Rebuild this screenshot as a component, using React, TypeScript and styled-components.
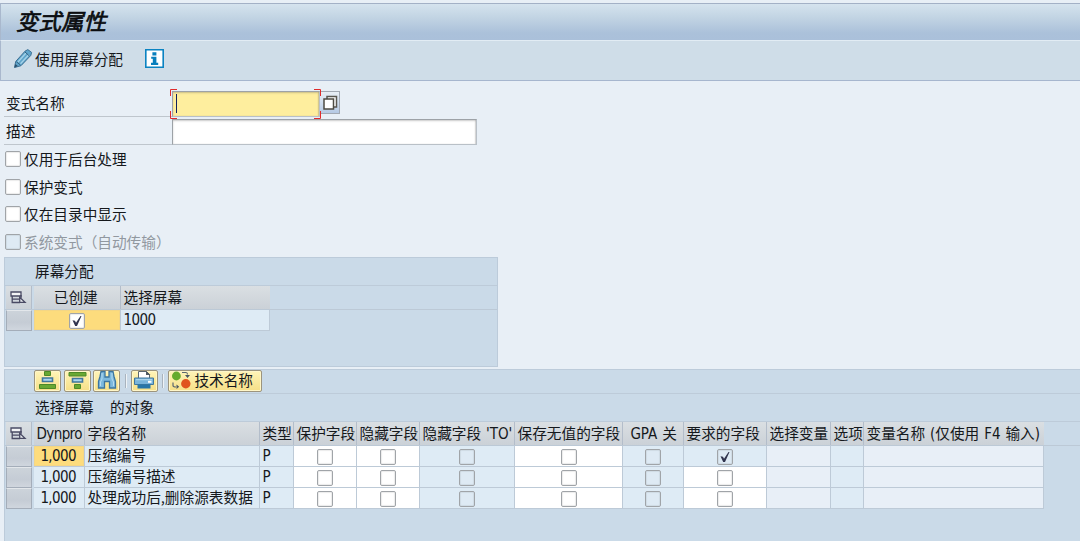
import React from 'react';
import styled, { createGlobalStyle, css } from 'styled-components';

const GlobalStyle = createGlobalStyle`
  * {
    box-sizing: border-box;
  }

  body {
    margin: 0;
    overflow: hidden;
    background: #e8eff6;
    color: #15181c;
    font-family: 'Noto Sans CJK SC', sans-serif;
    font-size: 14.67px;
    line-height: 20px;
    white-space: pre;
  }
`;

const Page = styled.div`
  display: flex;
  flex-direction: column;
  height: 541px;
  padding-top: 3px;
`;

const TitleBar = styled.header`
  flex: none;
  height: 37px;
  padding: 1px 0 0 15px;
  border-top: 1px solid #a3b1c6;
  border-left: 1px solid #a9b8cd;
  background: linear-gradient(#d5e3ee, #c3d5e4 35%, #abc1da 80%, #aac0da);
`;

const Title = styled.h1`
  margin: 0;
  font-size: 22.5px;
  font-weight: 400;
  font-style: italic;
  line-height: 30px;
  color: #0b0d10;
  -webkit-text-stroke: 0.7px #0b0d10;
`;

const AppToolbar = styled.div`
  flex: none;
  display: flex;
  align-items: center;
  height: 41px;
  padding: 0 0 4px 12px;
  border-top: 1px solid #e2ecf4;
  border-left: 1px solid #a9b8cd;
  border-bottom: 1px solid #a6b6ce;
  background: #cfdde8;
`;

const ToolbarAction = styled.button`
  display: flex;
  align-items: center;
  gap: 2px;
  margin: 0 22px 0 0;
  padding: 0;
  border: 0;
  background: none;
  color: inherit;
  font: inherit;
`;

const Form = styled.div`
  flex: none;
  padding: 10px 0 0 4px;
`;

const FieldRow = styled.div`
  display: flex;
  height: 28px;
`;

const FieldLabel = styled.label`
  width: 168px;
  height: 26px;
  padding: 2px 2px 0;
  border-bottom: 1px solid #bfc6cd;
`;

const TextField = styled.div<{ $width: number; $active?: boolean }>`
  position: relative;
  width: ${({ $width }) => $width}px;
  height: 26px;
  border: 1px solid #b9c0c7;
  border-top-color: #9da2a7;
  border-left-color: #9da2a7;
  box-shadow: inset 0 1px 2px rgba(90, 90, 90, 0.3), inset -1px 0 1px rgba(90, 90, 90, 0.2);
  background: ${({ $active }) => ($active ? '#feee9e' : '#fff')};
`;

const Caret = styled.span`
  display: block;
  width: 1px;
  height: 19px;
  margin: 2px 0 0 3px;
  background: #10205e;
`;

const FocusFrame = styled.svg`
  position: absolute;
  z-index: 1;
  left: -3px;
  top: -3px;
`;

const ValueHelp = styled.button`
  width: 20px;
  height: 23px;
  padding: 0;
  border: 1px solid #a2a9b3;
  border-left: 0;
  background: linear-gradient(#e9eff5, #b5c9e4);
  line-height: 0;
`;

const Options = styled.div`
  flex: none;
  height: 110px;
  padding-left: 5px;
`;

const Option = styled.label<{ $disabled?: boolean }>`
  display: flex;
  align-items: center;
  gap: 3px;
  height: 27.7px;
  padding-bottom: 4px;
  color: ${({ $disabled }) => ($disabled ? '#9198a0' : 'inherit')};
`;

const Box = styled.span<{ $disabled?: boolean }>`
  flex: none;
  width: 16px;
  height: 16px;
  border: 1px solid #a0a4a8;
  border-radius: 2px;
  box-shadow: inset 0 0 1px 1px ${({ $disabled }) => ($disabled ? '#cfdbe4' : '#ececec')};
  background: ${({ $disabled }) => ($disabled ? '#deeaf4' : '#fff')};
  line-height: 0;
`;

const Panel = styled.section<{ $compact?: boolean }>`
  margin-left: 4px;
  border: 1px solid #bccbda;
  background: #cadae8;
  ${({ $compact }) =>
    $compact
      ? css`
          flex: none;
          width: 494px;
          height: 110px;
        `
      : css`
          flex: 1;
          margin-top: 2px;
          border-right: 0;
          border-bottom: 0;
        `}
`;

const PanelTitle = styled.div`
  height: 28px;
  padding: 3px 0 0 30px;
  border-bottom: 1px solid #bdcbd9;
`;

const PanelToolbar = styled.div`
  display: flex;
  height: 24px;
  padding-left: 29px;
  border-bottom: 1px solid #bdcbd9;
`;

const ToolButton = styled.button<{ $wide?: boolean }>`
  display: flex;
  align-items: center;
  justify-content: ${({ $wide }) => ($wide ? 'flex-start' : 'center')};
  gap: 3px;
  width: ${({ $wide }) => ($wide ? 94 : 27)}px;
  height: 22px;
  margin-right: 2.6px;
  padding: 0 0 2px ${({ $wide }) => ($wide ? 2 : 0)}px;
  border: 1px solid #9c947d;
  border-radius: 2px;
  box-shadow: inset 0 0 0 1px #fff6c8;
  background: linear-gradient(#fff4b8, #f6df87);
  color: inherit;
  font: inherit;
  line-height: 18px;
`;

const ToolDivider = styled.span`
  width: 2px;
  height: 14px;
  margin: 4px 4px 0 2px;
  border-left: 1px solid #a9b3bd;
  background: #eef3f7;
`;

const Table = styled.div<{ $columns: string }>`
  [role='row'] {
    display: grid;
    grid-template-columns: 26px 2px ${({ $columns }) => $columns};
    padding-left: 1px;
    height: 21px;
  }
`;

const HeadRow = styled.div`
  &[role='row'] {
    height: 24px;
    border-bottom: 1px solid #bcc9d6;
  }
`;

const HeadCell = styled.div<{ $center?: boolean }>`
  padding: 1px ${({ $center }) => ($center ? 5 : 0)}px 0 2.5px;
  border-right: 1px solid #b3bdca;
  background: linear-gradient(#dadfe3, #cbd1d7);
  line-height: 19px;
  text-align: ${({ $center }) => ($center ? 'center' : 'left')};

  &:last-child {
    border-right: 0;
  }
`;

const Config = styled(HeadCell)`
  padding: 4px 0 0 4px;
  line-height: 0;
`;

const RowSelector = styled.div`
  border: 1px solid #a4adb9;
  border-top-color: #e3e7eb;
  background: linear-gradient(#ccd3da, #c5ccd5 60%, #d0d6de);
`;

type CellTone = 'read' | 'edit' | 'blank' | 'focus';

const tones: Record<CellTone, string> = {
  read: '#deebf5',
  edit: '#fff',
  blank: '#e8eff7',
  focus: '#fddc7d',
};

const Cell = styled.div<{ $tone?: CellTone; $right?: boolean }>`
  padding: 0 ${({ $right }) => ($right ? 8 : 0)}px 0 2.5px;
  border-right: 1px solid #bdcad7;
  border-bottom: 1px solid #bdcad7;
  background: ${({ $tone = 'read' }) => tones[$tone]};
  box-shadow: ${({ $tone }) => ($tone === 'focus' ? 'inset 0 0 0 1px #f4d685' : 'none')};
  line-height: 17px;
  text-align: ${({ $right }) => ($right ? 'right' : 'left')};
`;

const CheckCell = styled(Cell)`
  display: flex;
  justify-content: center;
  align-items: flex-start;
  padding: 3px 0 0;
`;

const Latin = styled.span<{ $tight?: boolean }>`
  font-family: 'DejaVu Sans Condensed', 'DejaVu Sans', sans-serif;
  font-stretch: condensed;
  font-size: 15px;
  letter-spacing: ${({ $tight }) => ($tight ? '-0.6px' : '0')};
  word-spacing: 0.6px;
`;

const CheckMark = () => (
  <svg width="14" height="14" viewBox="0 0 14 14">
    <path d="M2.5 6.2 5 6.8l1 2L10.5 2h1L7 12H5.2z" fill="#30344e" />
  </svg>
);

const Check: React.FC<{ checked?: boolean; disabled?: boolean }> = ({ checked, disabled }) => (
  <Box $disabled={disabled}>{checked && <CheckMark />}</Box>
);

const PencilIcon = () => (
  <svg width="20" height="20" viewBox="0 0 20 20">
    <path d="M1.5 18.5 2.7 12.5 12 2.2 14.8.6l3.8 2.8-.8 3L8 16.7z" fill="#5fa5cb" stroke="#3d7093" />
    <path d="M5 13 13 4M7.5 14.8 15.8 5.8" stroke="#a5d2e8" strokeWidth="1.3" />
    <path d="m12 3 4.2 3.8M3.3 12.7l4 3.2" stroke="#315f80" />
    <path d="m1.5 18.5.8-3.5 2.6 2z" fill="#2c516d" />
  </svg>
);

const InfoIcon = () => (
  <svg width="19" height="19" viewBox="0 0 19 19">
    <path fill="#fff" stroke="#0b83c2" strokeWidth="1.6" d="M.8.8h17.4v17.4H.8z" />
    <path fill="#087fbd" d="M7.4 3.2h4v3.2h-4zM6.2 7.7h5.2v6h1.8V16H6v-2.3h1.8V9.8H6.2z" />
  </svg>
);

const HelpIcon = () => (
  <svg width="16" height="20" viewBox="0 0 16 20">
    <path d="M5 3.5h9.5V14H5z" fill="#fff" stroke="#5a5750" strokeWidth="1.5" />
    <path d="M2 6h9.5v10H2z" fill="#fff" stroke="#4e4b43" strokeWidth="1.5" />
  </svg>
);

const ConfigIcon = () => (
  <svg width="17" height="16" viewBox="0 0 17 16" fill="none" stroke="#4a4b64" strokeWidth="1.3">
    <path d="M1 2h10v4H1z" fill="#f3f4f6" />
    <path d="M2.2 6v6.500H10M2.200 9.200H9M11 5v3" />
    <path d="M9.700 7.300 15 12.300H9.700z" fill="#e9ebef" />
  </svg>
);

const SortUpIcon = () => (
  <svg width="19" height="19" viewBox="0 0 19 19">
    <path d="M6.500 0.500h6V4.500h-6zM1.500 13.500h16v4h-16z" fill="#69a832" stroke="#4c8928" />
    <path d="M4.500 7h10v3.500h-10z" fill="#a9d5ef" stroke="#41779e" strokeWidth="1.6" />
  </svg>
);

const SortDownIcon = () => (
  <svg width="19" height="19" viewBox="0 0 19 19">
    <path d="M1 1.500h17v3.500H1zM6.500 13.500h6v4h-6z" fill="#69a832" stroke="#4c8928" />
    <path d="M4.500 7.500h10V11h-10z" fill="#a9d5ef" stroke="#41779e" strokeWidth="1.6" />
  </svg>
);

const FindIcon = () => (
  <svg width="20" height="20" viewBox="0 0 20 20">
    <path
      d="M4 1.5h4V7h4V1.5h4l1 5 1.5 5V18h-6v-6.5h-5V18h-6v-6.5L3 6.5z"
      fill="#7db9de"
      stroke="#3c759f"
      strokeWidth="1.3"
    />
    <path d="M5 3v6l-1.5 3v4M15 3v6l1.5 3v4" fill="none" stroke="#b6dbf0" />
  </svg>
);

const PrintIcon = () => (
  <svg width="22" height="20" viewBox="0 0 22 20">
    <path d="M5.5 9V1.5h8l3 3V9" fill="#fff" stroke="#5e6870" />
    <path d="M13 1v4h4.5z" fill="#4f5961" />
    <path d="M1.5 8h19v6.5h-19z" fill="#79b4db" stroke="#41779e" />
    <path d="M4.5 14.5h13v4h-13z" fill="#2876a8" />
    <path d="M3 9.7h16" stroke="#b6dcf1" />
    <path d="M15 10.8h3.5v2H15z" fill="#fff" />
  </svg>
);

const SwapIcon = () => (
  <svg width="20" height="18" viewBox="0 0 20 18">
    <circle cx="5.4" cy="5" r="4.4" fill="#66ab2d" />
    <circle cx="14.8" cy="12.8" r="4.7" fill="#e0531e" />
    <path d="M11 1.5h4q1.500 0 1.500 2M2 11.500v3q0 1.500 3 1.500" fill="none" stroke="#5b6770" strokeWidth="1.2" />
    <path d="M14 4h5l-2.500 3zM5.500 13.500V18L8.200 15.800z" fill="#4b5761" />
  </svg>
);

const options = ['仅用于后台处理', '保护变式', '仅在目录中显示'];

const fieldNames = ['压缩编号', '压缩编号描述', '处理成功后,删除源表数据'];

const ScreenAssignment = () => (
  <Panel $compact>
    <PanelTitle>屏幕分配</PanelTitle>
    <Table $columns="87px 149px">
      <HeadRow role="row">
        <Config><ConfigIcon /></Config>
        <span />
        <HeadCell $center>已创建</HeadCell>
        <HeadCell>选择屏幕</HeadCell>
      </HeadRow>
      <div role="row">
        <RowSelector />
        <span />
        <CheckCell $tone="focus"><Check checked /></CheckCell>
        <Cell><Latin $tight>1000</Latin></Cell>
      </div>
    </Table>
  </Panel>
);

const objectColumns = '51px 175px 34px 63px 63px 95px 108px 61px 83px 64px 33px 180px';

const ScreenObjects = () => (
  <Panel>
    <PanelToolbar>
      <ToolButton><SortUpIcon /></ToolButton>
      <ToolButton><SortDownIcon /></ToolButton>
      <ToolButton><FindIcon /></ToolButton>
      <ToolDivider />
      <ToolButton><PrintIcon /></ToolButton>
      <ToolDivider />
      <ToolButton $wide><SwapIcon />技术名称</ToolButton>
    </PanelToolbar>
    <PanelTitle>选择屏幕{'     '}的对象</PanelTitle>
    <Table $columns={objectColumns}>
      <HeadRow role="row">
        <Config><ConfigIcon /></Config>
        <span />
        <HeadCell><Latin $tight>Dynpro</Latin></HeadCell>
        <HeadCell>字段名称</HeadCell>
        <HeadCell>类型</HeadCell>
        <HeadCell>保护字段</HeadCell>
        <HeadCell>隐藏字段</HeadCell>
        <HeadCell>隐藏字段<Latin> 'TO'</Latin></HeadCell>
        <HeadCell>保存无值的字段</HeadCell>
        <HeadCell><Latin>{' GPA '}</Latin>关</HeadCell>
        <HeadCell>要求的字段</HeadCell>
        <HeadCell>选择变量</HeadCell>
        <HeadCell>选项</HeadCell>
        <HeadCell>变量名称<Latin> (</Latin>仅使用<Latin> F4 </Latin>输入<Latin>)</Latin></HeadCell>
      </HeadRow>
      {fieldNames.map((name, i) => (
        <div role="row" key={name}>
          <RowSelector />
          <span />
          <Cell $right $tone={i === 0 ? 'focus' : 'read'}><Latin $tight>1,000</Latin></Cell>
          <Cell>{name}</Cell>
          <Cell><Latin>P</Latin></Cell>
          <CheckCell $tone="edit"><Check /></CheckCell>
          <CheckCell $tone="edit"><Check /></CheckCell>
          <CheckCell><Check disabled /></CheckCell>
          <CheckCell $tone="edit"><Check /></CheckCell>
          <CheckCell><Check disabled /></CheckCell>
          <CheckCell $tone={i === 0 ? 'read' : 'edit'}>
            <Check checked={i === 0} disabled={i === 0} />
          </CheckCell>
          <Cell $tone="blank" />
          <Cell />
          <Cell $tone="blank" />
        </div>
      ))}
    </Table>
  </Panel>
);

const App: React.FC = () => (
  <>
    <GlobalStyle />
    <Page>
      <TitleBar>
        <Title>变式属性</Title>
      </TitleBar>
      <AppToolbar>
        <ToolbarAction><PencilIcon />使用屏幕分配</ToolbarAction>
        <InfoIcon />
      </AppToolbar>
      <Form>
        <FieldRow>
          <FieldLabel>变式名称</FieldLabel>
          <TextField $width={148} $active>
            <Caret />
            <FocusFrame width="151" height="30" viewBox="0 0 151 30">
              <path
                d="M.5 7V.5H7M144 .5h6.5V7M.5 22v7.5H7M144 29.5h6.5V22"
                fill="none"
                stroke="#e02b2b"
              />
            </FocusFrame>
          </TextField>
          <ValueHelp><HelpIcon /></ValueHelp>
        </FieldRow>
        <FieldRow>
          <FieldLabel>描述</FieldLabel>
          <TextField $width={305} />
        </FieldRow>
      </Form>
      <Options>
        {options.map(label => (
          <Option key={label}><Check />{label}</Option>
        ))}
        <Option $disabled><Check disabled />系统变式（自动传输）</Option>
      </Options>
      <ScreenAssignment />
      <ScreenObjects />
    </Page>
  </>
);

export default App;
